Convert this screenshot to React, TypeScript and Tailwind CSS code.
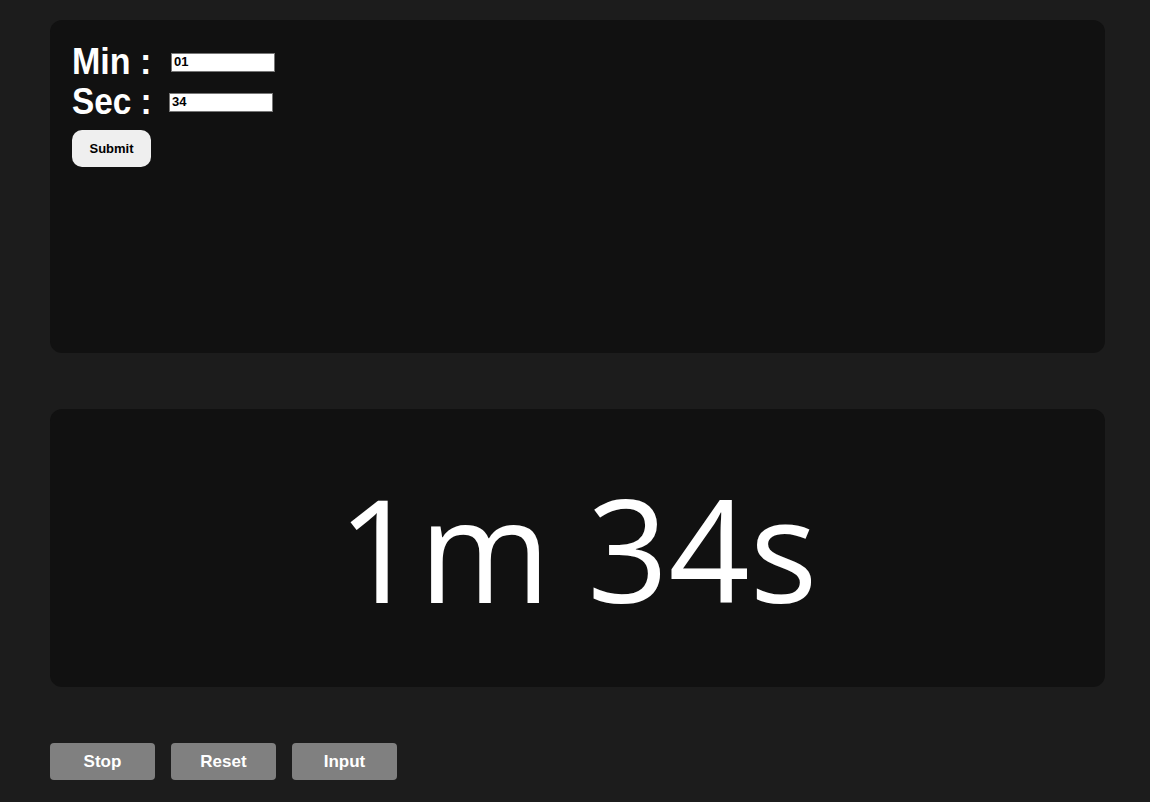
import React, { useState } from 'react';

export default function App() {
  const [min, setMin] = useState('01');
  const [sec, setSec] = useState('34');

  const total = (parseInt(min) || 0) * 60 + (parseInt(sec) || 0);
  const m = Math.floor(total / 60);
  const s = total % 60;

  return (
    <div className="min-h-screen bg-[#1c1c1c] pl-[50px] pr-[45px] pt-5 pb-[22px] text-white">
      {/* Input panel */}
      <div className="h-[333px] rounded-xl bg-[#111111] px-[22px] pt-[22px]">
        <div className="flex h-10 items-center">
          <span className="w-[99px] shrink-0">
            <span className="inline-block origin-left scale-x-[0.92] text-[37px] leading-10 font-bold font-['Liberation_Sans',sans-serif]">
              Min :
            </span>
          </span>
          <input
            value={min}
            onChange={(e) => setMin(e.target.value)}
            className="h-[19px] w-[104px] border border-[#767676] bg-white px-[2px] text-[13px] font-bold text-black outline-none font-['Liberation_Sans',sans-serif]"
          />
        </div>
        <div className="flex h-10 items-center">
          <span className="w-[97px] shrink-0">
            <span className="inline-block origin-left scale-x-[0.9] text-[37px] leading-10 font-bold font-['Liberation_Sans',sans-serif]">
              Sec :
            </span>
          </span>
          <input
            value={sec}
            onChange={(e) => setSec(e.target.value)}
            className="h-[19px] w-[104px] border border-[#767676] bg-white px-[2px] text-[13px] font-bold text-black outline-none font-['Liberation_Sans',sans-serif]"
          />
        </div>
        <button className="mt-2 h-[37px] w-[79px] rounded-[10px] bg-[#efefef] text-[13px] font-bold text-black font-['Liberation_Sans',sans-serif]">
          Submit
        </button>
      </div>

      {/* Timer display */}
      <div className="mt-14 flex h-[278px] items-center justify-center rounded-xl bg-[#111111]">
        <span className="text-[142px] leading-none font-normal font-['Open_Sans',sans-serif]">
          {m}m {s}s
        </span>
      </div>

      {/* Controls */}
      <div className="mt-14 flex gap-4">
        {['Stop', 'Reset', 'Input'].map((label) => (
          <button
            key={label}
            className="h-[37px] w-[105px] rounded bg-[#808080] text-[17px] font-bold text-white font-['Liberation_Sans',sans-serif]"
          >
            {label}
          </button>
        ))}
      </div>
    </div>
  );
}
